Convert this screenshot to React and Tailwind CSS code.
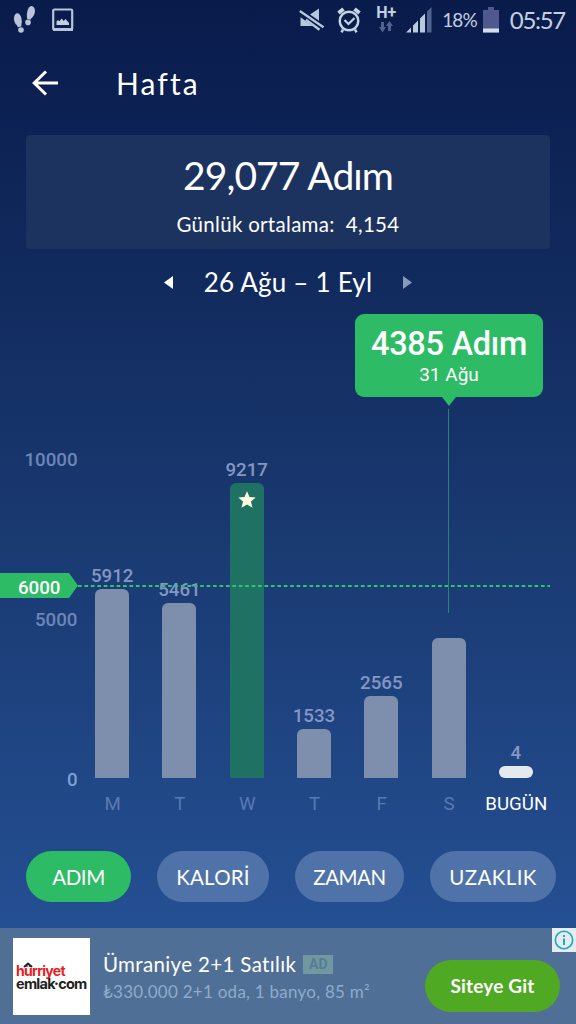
const PX_PER_STEP = 0.032;

const days = [
    { label: 'M', steps: 5912 },
    { label: 'T', steps: 5461 },
    { label: 'W', steps: 9217, goal: true },
    { label: 'T', steps: 1533 },
    { label: 'F', steps: 2565 },
    { label: 'S', steps: 4385, selected: true },
    { label: 'BUGÜN', steps: 4, today: true },
];

const tabs = [
    { name: 'ADIM', className: 'w-[105px] bg-[#2dbb66] tracking-[-0.4px]' },
    { name: 'KALORİ', className: 'w-[112px] bg-[#4f73a8] tracking-[0.2px]' },
    { name: 'ZAMAN', className: 'w-[109px] bg-[#4f73a8] tracking-[-0.5px]' },
    { name: 'UZAKLIK', className: 'w-[126px] bg-[#4f73a8] tracking-[0.4px]' },
];

const StatusBar = () => (
    <div className="flex h-10 items-center justify-between pl-[13px] pr-[11px] text-[#c3d0e0]">
        <div className="flex items-center gap-[16px]">
            <svg width="23" height="28" viewBox="0 0 23 28" fill="#b9c3dc">
                <ellipse cx="4.8" cy="13.5" rx="3.8" ry="6.2" transform="rotate(-8 4.8 13.5)" />
                <path d="M3 15h5.8l-.5 5.4-3.6.8z" />
                <ellipse cx="8" cy="24" rx="2.8" ry="2.7" />
                <ellipse cx="18" cy="6.2" rx="3.8" ry="6.2" transform="rotate(12 18 6.2)" />
                <path d="M13.8 8l6 1.3-2.2 4.4-3.6-.9z" />
                <ellipse cx="15" cy="16.4" rx="2.8" ry="2.8" />
            </svg>
            <svg width="22" height="24" viewBox="0 0 22 24">
                <rect x="1.2" y="1.5" width="19" height="20" rx="1.2" fill="none" stroke="#b5c3dc" strokeWidth="2.2" />
                <path d="M1 20h20v3H1z" fill="#b5c3dc" />
                <path d="M4.5 17v-3.5l1.5-1.5 1.5 1.2 2.2-2.7 2 2.4 1.8-2 3.5 4V17z" fill="#c3d0e4" />
            </svg>
        </div>

        <div className="flex items-center">
            <svg width="26" height="25" viewBox="0 0 26 25" fill="#b7c8dc" className="mr-[12px]">
                <path d="M11 6.500L20 .5v12.300z" />
                <path d="M1.500 9.300L14 18H1.500z" />
                <path d="M.8 3L24.500 19.200" stroke="#b7c8dc" strokeWidth="2.300" />
                <path d="M7 11.800l13.500 10" stroke="#b7c8dc" strokeWidth="2.400" />
            </svg>
            <svg width="24" height="26" viewBox="0 0 24 26" fill="none" stroke="#c3d4e2" className="mr-[15px]">
                <circle cx="12" cy="14" r="9.3" strokeWidth="2.5" />
                <path d="M1.5 6l5-4M22.5 6l-5-4" strokeWidth="4" />
                <path d="M7.5 13l4 4 6-6" strokeWidth="2.2" />
                <path d="M6 22.5l-1.500 2.800M18 22.500l1.500 2.800" strokeWidth="2.5" />
            </svg>
            <div className="mr-[10px] flex h-[30px] w-[20px] flex-col items-center">
                <span className="font-['Roboto',sans-serif] text-[16px] leading-[15px] font-bold">H+</span>
                <svg width="14" height="12" viewBox="0 0 14 12" fill="#52638f" className="mt-[1px]">
                    <path d="M2 1h3v5h2l-3.500 5.500L0 6h2zM9 10h3V5h2l-3.500-5L7 5h2z" />
                </svg>
            </div>
            <svg width="26" height="26" viewBox="0 0 26 26" fill="#b9cad8" className="mr-[10px]">
                <path d="M0 25.500l5-5v5zM7 18.500l5-5v12H7zM14 11.500l5-5v19h-5z" />
                <path d="M21 4.500l4.500-4.500v25.500H21z" fill="#506490" />
            </svg>
            <span className="mr-[6px] text-[19px] tracking-[-0.9px]">18%</span>
            <svg width="16" height="26" viewBox="0 0 16 26" className="mr-[11px]">
                <path d="M5 0h6v3h5v22.500H0V3h5z" fill="#50598f" />
                <path d="M0 21.500h16v4H0z" fill="#d4dfe8" />
            </svg>
            <span className="text-[24px] tracking-[-1.3px]">05:57</span>
        </div>
    </div>
);

const Day = ({ day }) => (
    <div className="flex h-full flex-1 flex-col items-center justify-end">
        {!day.selected && (
            <span className="mb-[2px] text-[18.7px] leading-[22px] font-medium text-[#8497c3]">{day.steps}</span>
        )}
        {day.today ? (
            <div className="h-3 w-[34px] rounded-full bg-[#e4e9f0]" />
        ) : (
            <div
                className={`flex w-[34px] shrink-0 justify-center rounded-t-[6px] pt-[8px] ${day.goal ? 'bg-[#1f7263]' : 'bg-[#7e8fae]'}`}
                style={{ height: Math.round(day.steps * PX_PER_STEP) }}
            >
                {day.goal && (
                    <svg width="18" height="18" viewBox="0 0 18 18" fill="#fbfbe0">
                        <path d="M9 .2l2.500 5.700 6.200.5-4.700 4.200 1.500 6.200L9 13.500l-5.500 3.300L5 10.600.3 6.400l6.200-.5z" />
                    </svg>
                )}
            </div>
        )}
    </div>
);

const Chart = () => (
    <div className="relative h-[520px] font-['Roboto',sans-serif]">
        <div className="flex h-[468px]">
            <div className="flex w-[78.5px] flex-col items-end justify-end pr-[1px] text-[18.7px] leading-[22px] font-medium text-[#6d86b9]">
                <span className="mb-[138px]">10000</span>
                <span className="mb-[138px]">5000</span>
                <span className="-mb-[13px] text-[#7ea0d3]">0</span>
            </div>
            <div className="flex w-[471px]">
                {days.map((day, i) => <Day key={i} day={day} />)}
            </div>
        </div>
        <div className="mt-[15px] ml-[79px] flex w-[471px] text-[18.7px] leading-[22px]">
            {days.map((day, i) => (
                <span key={i} className={`flex flex-1 justify-center ${day.today ? 'text-white' : 'text-[#587ab3]'}`}>
                    {day.label}
                </span>
            ))}
        </div>

        {/* daily goal */}
        <svg width="472" height="2" className="absolute top-[274.5px] left-[78px]">
            <path d="M0 1h472" stroke="#2fc56b" strokeWidth="1.8" strokeDasharray="3.7 2.73" />
        </svg>
        <div className="absolute top-[263px] left-0 flex h-[25px] w-[78px] items-center bg-[#2dbb66] pl-[18px] text-[18.7px] font-medium text-white [clip-path:polygon(0_0,69px_0,100%_50%,69px_100%,0_100%)]">
            <span className="mt-[5px]">6000</span>
        </div>

        {/* selected day */}
        <div className="absolute top-[99px] left-[448px] h-[204px] w-px bg-[#2b8377]" />
        <div className="absolute top-[4px] left-[355px] flex flex-col items-center text-white">
            <div className="flex h-[83px] w-[188px] flex-col items-center rounded-[9px] bg-[#2dbb66] pt-[11px]">
                <span className="text-[32.5px] leading-[38px] font-medium tracking-[-0.3px]">4385 Adım</span>
                <span className="text-[19px] leading-[24px]">31 Ağu</span>
            </div>
            <svg width="14" height="9" viewBox="0 0 14 9" fill="#2dbb66">
                <path d="M0 0h14L7 9z" />
            </svg>
        </div>
    </div>
);

const AdBanner = () => (
    <div className="relative flex h-24 bg-[#506f96] pl-[13px] text-white">
        <div className="mt-[10px] flex h-[77px] w-[77px] flex-col bg-white pt-[25px] pl-[3px] font-['Inter',sans-serif] font-bold">
            <div className="relative flex flex-col">
                <svg width="10" height="6" viewBox="0 0 10 6" className="absolute -top-px left-[7px]">
                    <path d="M1 5l4-3.500L9 5" fill="none" stroke="#222" strokeWidth="2" />
                </svg>
                <span className="text-[14px] leading-[15px] tracking-[-0.7px] text-[#e3201f]">hürriyet</span>
                <span className="text-[14.5px] leading-[12px] tracking-[-0.75px] whitespace-nowrap text-[#222]">emlak·com</span>
            </div>
        </div>
        <div className="ml-[13px] pt-[23px]">
            <div className="flex items-center gap-[7px]">
                <span className="text-[20.5px] leading-[26px] tracking-[0.35px]">Ümraniye 2+1 Satılık</span>
                <span className="flex h-[19px] w-[30px] items-center justify-center bg-[#7197a0] font-['Roboto',sans-serif] text-[14px] font-bold text-[#557d94]">
                    AD
                </span>
            </div>
            <p className="mt-[4px] text-[17px] leading-[22px] tracking-[0.26px] whitespace-nowrap text-[#8fabcd]">₺330.000 2+1 oda, 1 banyo, 85 m²</p>
        </div>
        <button className="mt-[32px] mr-4 ml-auto h-[52px] w-[135px] rounded-full bg-[#50a923] text-[19px] font-bold tracking-[0.2px]">
            Siteye Git
        </button>
        <div className="absolute top-0 right-0 flex size-6 items-center justify-center bg-[#e7ebee]">
            <svg width="20" height="20" viewBox="0 0 20 20" fill="none" stroke="#19a9cb">
                <circle cx="10" cy="10" r="8.7" strokeWidth="1.6" />
                <path d="M10 8.500v6.500M10 5v2" strokeWidth="2" />
            </svg>
        </div>
    </div>
);

const App = () => {
    return (
        <div className="h-[1024px] w-[576px] overflow-hidden bg-linear-to-b from-[#091b4b] via-[#19386f] to-[#27559b] font-['Lato',sans-serif]">
            <StatusBar />
            <header className="flex h-[95px] items-center pb-[9px] pl-[32px] text-white">
                <svg width="26" height="26" viewBox="0 0 26 26" fill="none" stroke="white" strokeWidth="3">
                    <path d="M26 13H3M14 1.500L2.200 13 14 24.500" />
                </svg>
                <h1 className="ml-[58px] text-[30px] tracking-[2.1px]">Hafta</h1>
            </header>

            <div className="mx-[26px] flex h-[114px] flex-col items-center rounded-[4px] bg-[#1c3360] pt-[16px] text-white">
                <p className="text-[39px] leading-[48px] tracking-[-0.9px]">29,077 Adım</p>
                <p className="mt-[12px] text-[20.5px] leading-[26px] tracking-[0.3px] whitespace-pre">Günlük ortalama:  4,154</p>
            </div>

            <div className="flex h-[61px] items-center justify-center gap-[31px] pt-[6px] text-white">
                <svg width="9" height="13" viewBox="0 0 10 13" preserveAspectRatio="none" fill="white">
                    <path d="M0 6.500L10 0v13z" />
                </svg>
                <span className="text-[26px] tracking-[0.2px]">26 Ağu – 1 Eyl</span>
                <svg width="9" height="13" viewBox="0 0 10 13" preserveAspectRatio="none" fill="#8499bd">
                    <path d="M10 6.500L0 0v13z" />
                </svg>
            </div>

            <Chart />

            <div className="flex h-[98px] gap-[26px] pt-[21px] pl-[26px]">
                {tabs.map((tab) => (
                    <button key={tab.name} className={`h-[51px] rounded-full pt-px text-[20.5px] text-white ${tab.className}`}>
                        {tab.name}
                    </button>
                ))}
            </div>

            <AdBanner />
        </div>
    );
};

export default App;
